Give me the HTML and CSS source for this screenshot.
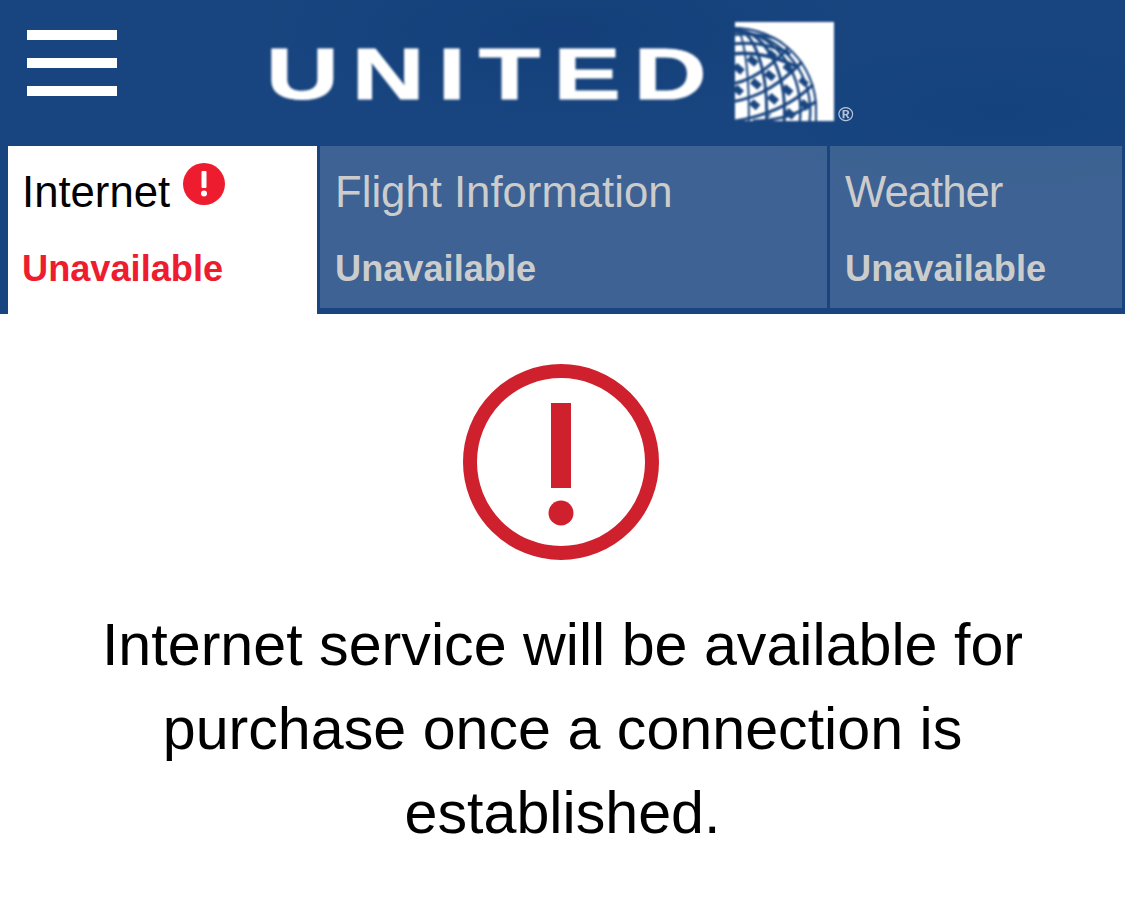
FILE: index.html
```html
<!DOCTYPE html>
<html lang="en">
<head>
    <meta charset="UTF-8">
    <meta name="viewport" content="width=device-width, initial-scale=1.0">
    <title>United Wi-Fi</title>
    <link rel="stylesheet" href="styles.css">
</head>
<body>
    <div class="top">
        <header class="header">
            <div class="menu-btn"><span></span><span></span><span></span></div>
            <div class="logo">
                <span class="logo-text">UNITED</span>
                <svg class="globe" viewBox="0 0 100 100">
                    <defs>
                        <clipPath id="globe-clip"><path d="M0 5A83 83 0 0 1 83 88V100H0Z"/></clipPath>
                    </defs>
                    <rect width="100" height="100" fill="#fff"/>
                    <g clip-path="url(#globe-clip)" fill="none" stroke="#1a4680">
                        <!-- meridians -->
                        <path d="M0 6A82 82 0 0 1 82 88V100" stroke-width="2.500"/>
                        <ellipse cx="0" cy="90" rx="76" ry="80" stroke-width="2.500"/>
                        <ellipse cx="0" cy="90" rx="66" ry="81" stroke-width="2.500"/>
                        <ellipse cx="0" cy="90" rx="50" ry="82" stroke-width="3"/>
                        <ellipse cx="0" cy="90" rx="32" ry="83" stroke-width="3"/>
                        <ellipse cx="0" cy="90" rx="14" ry="84" stroke-width="2"/>
                        <!-- parallels -->
                        <path d="M0 13Q26 10 50 20" stroke-width="2.500"/>
                        <path d="M0 22Q28 19 56 32" stroke-width="3"/>
                        <path d="M0 32Q30 29 64 46" stroke-width="3.500"/>
                        <path d="M0 100Q50 92 80 62" stroke-width="3"/>
                        <path d="M18 100Q56 100 82 80" stroke-width="3"/>
                        <path d="M0 80Q36 74 70 38" stroke-width="3"/>
                        <path d="M0 62Q26 56 54 26" stroke-width="3"/>
                        <!-- dark diamonds where the lines cross -->
                        <path d="M0 44L64 100" stroke-width="7" stroke-dasharray="10 13"/>
                        <path d="M14 36L78 90" stroke-width="7" stroke-dasharray="10 13"/>
                        <path d="M0 66L34 96" stroke-width="7" stroke-dasharray="9 13"/>
                        <path d="M34 30L78 68" stroke-width="6" stroke-dasharray="9 12"/>
                    </g>
                </svg>
                <span class="reg">®</span>
            </div>
        </header>
        <nav class="tabs">
            <div class="tab tab-internet active">
                <div class="tab-title">Internet
                    <svg class="alert-small" viewBox="0 0 42 42">
                        <circle cx="21" cy="21" r="21" fill="#ed1c2e"/>
                        <rect x="18.500" y="8" width="5" height="17" rx="1" fill="#fff"/>
                        <circle cx="21" cy="30.500" r="3" fill="#fff"/>
                    </svg>
                </div>
                <div class="tab-status">Unavailable</div>
            </div>
            <div class="tab tab-flight">
                <div class="tab-title">Flight Information</div>
                <div class="tab-status">Unavailable</div>
            </div>
            <div class="tab tab-weather">
                <div class="tab-title">Weather</div>
                <div class="tab-status">Unavailable</div>
            </div>
        </nav>
    </div>

    <main class="content">
        <svg class="alert-big" viewBox="0 0 196 196">
            <circle cx="98" cy="98" r="91" fill="none" stroke="#cf202e" stroke-width="14"/>
            <rect x="88" y="39" width="20" height="85" fill="#cf202e"/>
            <circle cx="98" cy="149" r="12.500" fill="#cf202e"/>
        </svg>
        <p class="message">Internet service will be available for purchase once a connection is established.</p>
    </main>
</body>
</html>
```

FILE: styles.css
```css
* {
    margin: 0;
    padding: 0;
    box-sizing: border-box;
}

body {
    font-family: "Liberation Sans", Arial, sans-serif;
    background: #fff;
    color: #000;
    height: 924px;
    overflow: hidden;
}

.top {
    background:
        radial-gradient(ellipse 300px 90px at 560px 30px, rgba(10, 50, 110, 0.3), transparent),
        radial-gradient(ellipse 260px 80px at 1000px 110px, rgba(10, 60, 120, 0.3), transparent),
        #18457f;
    padding-bottom: 6px;
}

.header {
    height: 146px;
    display: flex;
    padding-left: 27px;
}

.menu-btn {
    width: 90px;
    padding-top: 30px;
    display: flex;
    flex-direction: column;
    gap: 18px;
}

.menu-btn span {
    display: block;
    height: 10px;
    background: #fff;
}

.logo {
    margin-left: 149px;
    padding-top: 22px;
    display: flex;
    align-items: flex-start;
}

.logo-text {
    width: 469px;
    margin-top: 16px;
    font-weight: 700;
    font-size: 73px;
    line-height: 72px;
    letter-spacing: 9.5px;
    white-space: nowrap;
    color: #fff;
    -webkit-text-stroke: 1px #fff;
    transform: scaleX(1.38);
    transform-origin: left center;
    filter: blur(0.8px);
}

.globe {
    width: 99px;
    height: 99px;
    filter: blur(0.9px);
}

.reg {
    margin-top: 82px;
    margin-left: 4px;
    font-size: 21px;
    line-height: 20px;
    font-weight: 700;
    color: #b4c3d8;
    filter: blur(0.6px);
}

.tabs {
    display: flex;
    gap: 3px;
    padding: 0 3px 0 8px;
    height: 162px;
}

.tab {
    padding: 21px 0 0 15px;
    background: rgba(255, 255, 255, 0.16);
    color: #cccccc;
}

.tab.active {
    background: #fff;
    color: #000;
    margin-bottom: -6px;
    padding-left: 14px;
}

.tab-internet { width: 309px; }
.tab-flight { width: 507px; }
.tab-weather { width: 292px; }

.tab-title {
    font-size: 43.7px;
    line-height: 50px;
    display: flex;
    align-items: flex-start;
}

.tab-weather .tab-title {
    letter-spacing: -1px;
}

.alert-small {
    width: 42px;
    height: 42px;
    margin: -4px 0 0 13px;
}

.tab-status {
    margin-top: 32px;
    font-size: 36.2px;
    line-height: 40px;
    font-weight: 700;
}

.active .tab-status {
    color: #ed1c2e;
}

.content {
    display: flex;
    flex-direction: column;
    align-items: center;
    padding-top: 50px;
}

.alert-big {
    width: 196px;
    height: 196px;
    margin-right: 4px;
}

.message {
    width: 960px;
    margin-top: 43px;
    text-align: center;
    font-size: 59.2px;
    line-height: 84px;
}
```
